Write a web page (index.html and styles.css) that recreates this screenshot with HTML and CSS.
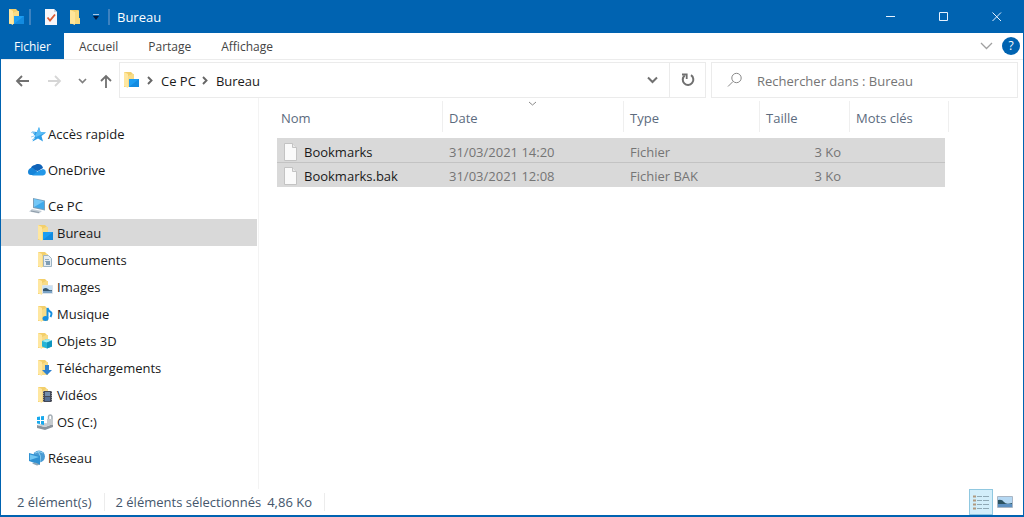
FILE: index.html
```
<!DOCTYPE html>
<html lang="fr">
  <head>
    <meta charset="utf-8">
    <title>Bureau</title>
    <link rel="stylesheet" href="styles.css">
  </head>
  <body>
    <!-- shared folder shapes -->
    <svg class="defs" width="0" height="0">
      <symbol id="folder" viewBox="0 0 18 18">
        <path d="M1 1h7l2 2v13H1z" fill="#f3cf6b"/>
        <path d="M1 1l4 2v14l-4-2z" fill="#ffe7a0"/>
        <path d="M9 3h2v13H5V5z" fill="#f8dc88"/>
      </symbol>
      <symbol id="desktop" viewBox="0 0 18 18">
        <use href="#folder"/>
        <path d="M6 8h10v8H6z" fill="#1c9df2"/>
        <path d="M6 16L16 8v8z" fill="#138be0"/>
      </symbol>
      <symbol id="file" viewBox="0 0 15 18">
        <path d="M1.500.5h8l4 4v13h-12z" fill="#fafafa" stroke="#c3c3c3"/>
        <path d="M9.500.5v4h4" fill="#e8e8e8" stroke="#c3c3c3"/>
      </symbol>
    </svg>

    <header class="titlebar">
      <svg class="icon" viewBox="0 0 18 18"><use href="#desktop"/></svg>
      <span class="divider"></span>
      <button class="quick" aria-label="Propriétés">
        <svg width="14" height="18" viewBox="0 0 14 18"><path d="M1 1h9l3 3v13H1z" fill="#f6f6fa"/><path d="M10 1l3 3h-3z" fill="#c9d3e3"/><path d="M3.500 9.500l2.500 3 5-6" fill="none" stroke="#dc5a32" stroke-width="1.800"/></svg>
      </button>
      <button class="quick" aria-label="Nouveau dossier">
        <svg width="14" height="18" viewBox="0 0 14 18"><path d="M2 2h8v8h2v6H2z" fill="#f2cf6c"/><path d="M2 2l5 2v13l-5-2z" fill="#ffe59a"/><path d="M7 4l4-2v8l1 1v5H7z" fill="#f8da80"/></svg>
      </button>
      <button class="quick small" aria-label="Personnaliser">
        <svg width="8" height="8" viewBox="0 0 8 8"><path d="M1 1.500h6" stroke="#a9c8e6"/><path d="M1 3h6L4 7z" fill="#061a3c"/></svg>
      </button>
      <span class="divider"></span>
      <span class="title">Bureau</span>
      <div class="controls">
        <button aria-label="Réduire"><svg width="10" height="10"><path d="M0 4.500h9" stroke="#e6f2ff"/></svg></button>
        <button aria-label="Agrandir"><svg width="10" height="10"><path d="M.5.5h8v8h-8z" fill="none" stroke="#e6f2ff"/></svg></button>
        <button aria-label="Fermer"><svg width="10" height="10"><path d="M.5.5l8.500 8.500M9 .5L.5 9" stroke="#e6f2ff"/></svg></button>
      </div>
    </header>

    <nav class="ribbon">
      <button class="tab file">Fichier</button>
      <button class="tab">Accueil</button>
      <button class="tab">Partage</button>
      <button class="tab">Affichage</button>
      <button class="expand" aria-label="Développer le ruban"><svg width="13" height="8"><path d="M1 1l5.500 5.500L12 1" fill="none" stroke="#a0a0a0" stroke-width="1.300"/></svg></button>
      <button class="help" aria-label="Aide">?</button>
    </nav>

    <div class="toolbar">
      <div class="history">
        <button aria-label="Précédent"><svg width="16" height="12" viewBox="0 0 16 12"><path d="M14 6H2M7 1L2 6l5 5" fill="none" stroke="#707070" stroke-width="1.800"/></svg></button>
        <button aria-label="Suivant"><svg width="16" height="12" viewBox="0 0 16 12"><path d="M1 6h12M8 1l5 5-5 5" fill="none" stroke="#d6d6d6" stroke-width="1.800"/></svg></button>
        <button class="recent" aria-label="Récents"><svg width="9" height="6"><path d="M1 1l3.500 3.500L8 1" fill="none" stroke="#808080" stroke-width="1.700"/></svg></button>
        <button class="up" aria-label="Dossier parent"><svg width="12" height="14" viewBox="0 0 12 14"><path d="M6 14V2M1 7l5-5 5 5" fill="none" stroke="#707070" stroke-width="1.800"/></svg></button>
      </div>
      <div class="address">
        <svg class="icon" viewBox="0 0 18 18"><use href="#desktop"/></svg>
        <svg class="arrow" width="6" height="9"><path d="M1 1l3.500 3.500L1 8" fill="none" stroke="#666" stroke-width="1.900"/></svg>
        <a href="#">Ce PC</a>
        <svg class="arrow" width="6" height="9"><path d="M1 1l3.500 3.500L1 8" fill="none" stroke="#666" stroke-width="1.900"/></svg>
        <a href="#">Bureau</a>
        <button class="drop" aria-label="Emplacements précédents"><svg width="11" height="8"><path d="M1 1.500L5.500 6 10 1.500" fill="none" stroke="#707070" stroke-width="2"/></svg></button>
        <button class="refresh" aria-label="Actualiser"><svg width="14" height="14" viewBox="0 0 14 14"><path d="M10 2.200a5.300 5.300 0 1 1-6.300.3" fill="none" stroke="#707070" stroke-width="2"/><path d="M1 1.500h4.700v4.500" fill="none" stroke="#707070" stroke-width="1.800"/></svg></button>
      </div>
      <label class="search">
        <svg width="16" height="16" viewBox="0 0 16 16"><circle cx="9.500" cy="6" r="4.700" fill="none" stroke="#888"/><path d="M6 9.500L1 14.500" stroke="#888"/></svg>
        <input type="text" aria-label="Rechercher" placeholder="Rechercher dans : Bureau">
      </label>
    </div>

    <main class="content">
      <nav class="sidebar">
        <ul>
          <li><a href="#"><svg class="icon" viewBox="0 0 18 18"><path d="M11 2l1.500 5 5.500.5-4.500 3.500 1.500 5.500-5-3-5.500 3 2.500-5.500L4 6.500l5 .5z" fill="#2f9fe8"/><path d="M11 2l1.500 5 5.500.5L8 12l-1-1 2-4z" fill="#5cbdf5"/><path d="M3 7.500l4 .5M3 12l3-1M4 15l3-2" stroke="#9bd2f5"/></svg>Accès rapide</a></li>
        </ul>
        <ul>
          <li><a href="#"><svg class="icon" viewBox="0 0 18 18"><path d="M3 9a4 4 0 0 1 4-5 5 5 0 0 1 8 3l-5 3z" fill="#1063b8"/><path d="M0 11a4 4 0 0 1 5-4l8 7H3a3 3 0 0 1-3-3z" fill="#1684d8"/><path d="M4 14.500l7-5 4-1.500a3.300 3.300 0 0 1 0 6.500z" fill="#2398e8"/></svg>OneDrive</a></li>
        </ul>
        <ul>
          <li><a href="#"><svg class="icon" viewBox="0 0 18 18"><path d="M5 1l12 2.500v10L5 11z" fill="#7b9fb9"/><path d="M6 2l10 2.300v8L6 10z" fill="#40a9ea"/><path d="M6 2l10 2.300L6 10z" fill="#74c7f6"/><path d="M4 12l10 2-3 2.500L1 14.500z" fill="#c2cdd6"/><path d="M3 14l8 1.500" stroke="#8d9ba8"/></svg>Ce PC</a></li>
          <li class="sub active"><a href="#"><svg class="icon" viewBox="0 0 18 18"><use href="#desktop"/></svg>Bureau</a></li>
          <li class="sub"><a href="#"><svg class="icon" viewBox="0 0 18 18"><use href="#folder"/><path d="M6.500 4.500h5l3 3v8h-8z" fill="#e6edf2" stroke="#9db4c4"/><path d="M8 8.500h4M8 10.500h5" stroke="#8fabc0"/><path d="M9 10h4v4H9z" fill="#7f9db5"/></svg>Documents</a></li>
          <li class="sub"><a href="#"><svg class="icon" viewBox="0 0 18 18"><use href="#folder"/><path d="M5.500 7.500h10v8h-10z" fill="#c7e0f4" stroke="#dbe3eb"/><path d="M6 11q3-2 5 0t4 1v1H6z" fill="#34566f"/><path d="M6 13h9v2H6z" fill="#7aa3c6"/></svg>Images</a></li>
          <li class="sub"><a href="#"><svg class="icon" viewBox="0 0 18 18"><use href="#folder"/><ellipse cx="8.500" cy="13.500" rx="3" ry="2.500" fill="#168fe0"/><path d="M10.500 13V3q1 3 3 4t0 5" fill="none" stroke="#168fe0" stroke-width="2"/></svg>Musique</a></li>
          <li class="sub"><a href="#"><svg class="icon" viewBox="0 0 18 18"><use href="#folder"/><path d="M5 9l5-2 5 1.500v6l-5 2-5-2z" fill="#25b4d5"/><path d="M5 9l5-2 5 1.500-5 2z" fill="#a0ecf3"/><path d="M10 10.500l5-2v6l-5 2z" fill="#0f95bf"/></svg>Objets 3D</a></li>
          <li class="sub"><a href="#"><svg class="icon" viewBox="0 0 18 18"><use href="#folder"/><path d="M8 6h4v5h3l-5 5-5-5h3z" fill="#2f82cf"/></svg>Téléchargements</a></li>
          <li class="sub"><a href="#"><svg class="icon" viewBox="0 0 18 18"><use href="#folder"/><path d="M6 5h9v11H6z" fill="#454a58"/><path d="M8 6h5v4H8z" fill="#728dad"/><path d="M8 11h5v4H8z" fill="#557096"/><path d="M6.500 5v11M14.500 5v11" stroke="#9a9a9a" stroke-dasharray="1 1"/></svg>Vidéos</a></li>
          <li class="sub"><a href="#"><svg class="icon" viewBox="0 0 18 18"><path d="M0 12l8 2 8-3v3l-8 3-8-2z" fill="#8b949d"/><path d="M0 12l8-2 8 1-8 3z" fill="#c6ccd1"/><path d="M0 4l3-.5V7H0zM4 3.300L7 3v4H4zM0 8h3v3l-3-.5zM4 8h3v4l-3-.8z" fill="#18a9ed"/><path d="M11.500 6V3.500a1.800 1.800 0 0 1 3.500 0V6" fill="none" stroke="#a4adb5" stroke-width="1.500"/><path d="M10 6h6v6h-6z" fill="#c4cace"/></svg>OS (C:)</a></li>
        </ul>
        <ul>
          <li><a href="#"><svg class="icon" viewBox="0 0 18 18"><circle cx="11" cy="7.500" r="6" fill="#4a9bd3"/><path d="M7 4q4-3 8 0M10 2q4 5 2 11" fill="none" stroke="#8fd0f0"/><path d="M1 4l11 3v9L1 12z" fill="#2f91d2"/><path d="M2 5.500l9 2.500-9 3z" fill="#71c6f2"/><path d="M4 14.500l5 2 3-1-5-2z" fill="#8aa5b8"/></svg>Réseau</a></li>
        </ul>
      </nav>

      <section class="files">
        <table>
          <thead>
            <tr>
              <th class="name">Nom</th>
              <th class="date">Date<svg class="sort" width="9" height="6"><path d="M1 1l3.500 3L8 1" fill="none" stroke="#8a8a8a"/></svg></th>
              <th class="type">Type</th>
              <th class="size">Taille</th>
              <th class="tags">Mots clés</th>
            </tr>
          </thead>
          <tbody>
            <tr>
              <td><div class="entry"><svg width="15" height="18"><use href="#file"/></svg>Bookmarks</div></td>
              <td>31/03/2021 14:20</td>
              <td>Fichier</td>
              <td class="number">3 Ko</td>
              <td></td>
            </tr>
            <tr>
              <td><div class="entry"><svg width="15" height="18"><use href="#file"/></svg>Bookmarks.bak</div></td>
              <td>31/03/2021 12:08</td>
              <td>Fichier BAK</td>
              <td class="number">3 Ko</td>
              <td></td>
            </tr>
          </tbody>
        </table>
      </section>
    </main>

    <footer class="status">
      <span class="count">2 élément(s)</span>
      <span class="selected">2 éléments sélectionnés</span>
      <span class="total">4,86 Ko</span>
      <div class="views">
        <button class="on" aria-label="Détails"><svg width="18" height="16" viewBox="0 0 18 16"><path d="M1 2.500h3M1 6.500h3M1 10.500h3M1 14.500h3" stroke="#b09a80" stroke-width="2"/><path d="M5 2.500h5M11 2.500h6M5 6.500h5M11 6.500h6M5 10.500h5M11 10.500h6M5 14.500h5M11 14.500h6" stroke="#8fa9b5"/></svg></button>
        <button aria-label="Grandes icônes"><svg width="16" height="12" viewBox="0 0 16 12"><path d="M.5.5h15v11H.5z" fill="#b5d8f3" stroke="#a9b6c4"/><path d="M1 4q4-1 6 2t8 1v1H1z" fill="#2b5261"/><path d="M1 8h14v3H1z" fill="#5b8fc0"/></svg></button>
      </div>
    </footer>
  </body>
</html>
```

FILE: styles.css
```
* {
  box-sizing: border-box;
}
body {
  margin: 0;
  min-height: 100vh;
  display: flex;
  flex-direction: column;
  border: 1px solid #0063b1;
  border-top: none;
  border-bottom-width: 2px;
  background-color: #ffffff;
  color: #1a1a1a;
  font-family: "Open Sans", "Noto Sans", sans-serif;
  font-size: 13px;
  line-height: 18px;
}
button {
  display: flex;
  align-items: center;
  justify-content: center;
  padding: 0;
  border: none;
  background: none;
  font: inherit;
  color: inherit;
}
a {
  color: inherit;
  text-decoration: none;
}
svg {
  display: block;
  flex: none;
}
.defs {
  position: absolute;
}
.icon {
  width: 18px;
  height: 18px;
}

/* Title bar */
.titlebar {
  display: flex;
  align-items: center;
  height: 33px;
  padding-left: 7px;
  background-color: #0063b1;
  color: #ffffff;
}
.divider {
  width: 2px;
  height: 16px;
  margin: 0 4px 0 3px;
  background-color: #3d82c0;
}
.quick {
  width: 24px;
  height: 24px;
}
.quick:first-of-type {
  margin-left: 4px;
}
.quick.small {
  width: 18px;
}
.title {
  margin-left: 3px;
}
.controls {
  display: flex;
  margin-left: auto;
}
.controls button {
  width: 53px;
  height: 33px;
}

/* Ribbon tabs */
.ribbon {
  display: flex;
  align-items: center;
  height: 27px;
  padding-right: 3px;
  border-bottom: 1px solid #ececec;
  font-size: 12px;
  color: #444444;
}
.tab {
  height: 26px;
  padding: 2px 15px 0;
}
.tab.file {
  width: 63px;
  background-color: #0063b1;
  color: #ffffff;
}
.expand {
  width: 24px;
  height: 26px;
  margin-left: auto;
  margin-right: 4px;
}
.help {
  width: 18px;
  height: 18px;
  border-radius: 50%;
  background-color: #0063b1;
  color: #ffffff;
}

/* Navigation and address */
.toolbar {
  display: flex;
  align-items: center;
  height: 38px;
  padding: 2px 5px 0 13px;
}
.history {
  display: flex;
  width: 105px;
}
.history button {
  width: 18px;
  height: 36px;
  padding-top: 2px;
  margin-right: 14px;
}
.history .recent {
  width: 9px;
  margin-right: 10px;
}
.history .up {
  margin-right: 0;
}
.address {
  flex: 582;
  display: flex;
  align-items: center;
  height: 36px;
  padding-left: 3px;
  border: 1px solid #ebebeb;
}
.address a {
  padding-top: 2px;
}
.arrow {
  margin: 0 8px 0 6px;
}
.drop {
  width: 34px;
  height: 34px;
  margin-left: auto;
}
.refresh {
  width: 36px;
  height: 34px;
  border-left: 1px solid #ebebeb;
}
.search {
  flex: 290;
  display: flex;
  align-items: center;
  height: 36px;
  margin-left: 5px;
  padding-left: 15px;
  border: 1px solid #ebebeb;
}
.search input {
  flex: 1;
  min-width: 0;
  margin-left: 14px;
  padding: 2px 0 0;
  border: none;
  outline: none;
  background: none;
  font: inherit;
}
.search input::placeholder {
  color: #757575;
  opacity: 1;
}

/* Side panel */
.content {
  flex: 1;
  display: flex;
}
.sidebar {
  width: 258px;
  padding-top: 22px;
  padding-right: 1px;
  border-right: 1px solid #f3f3f3;
}
.sidebar ul {
  margin: 0 0 9px;
  padding: 0;
  list-style: none;
}
.sidebar a {
  display: flex;
  align-items: center;
  gap: 2px;
  height: 27px;
  padding-left: 27px;
}
.sidebar .sub a {
  padding-left: 36px;
}
.sidebar .active {
  background-color: #d9d9d9;
}

/* File list */
.files {
  flex: 1;
  padding: 3px 0 0 18px;
}
table {
  width: 672px;
  table-layout: fixed;
  border-collapse: separate;
  border-spacing: 0;
}
th {
  position: relative;
  height: 37px;
  padding: 8px 0 0 6px;
  background: linear-gradient(#efefef, #efefef) no-repeat right top / 1px 31px;
  vertical-align: top;
  text-align: left;
  font-weight: normal;
  color: #5c6b7e;
}
th.name {
  width: 166px;
  padding-left: 4px;
}
th.date {
  width: 181px;
}
th.type {
  width: 136px;
}
th.size {
  width: 90px;
}
.sort {
  position: absolute;
  top: 0;
  left: 50%;
  margin-left: -6px;
}
td {
  height: 24px;
  padding: 2px 0 0 6px;
  background-color: #d9d9d9;
  background-clip: padding-box;
  color: #757575;
}
tbody tr:first-child td {
  height: 25px;
  box-shadow: inset 0 -1px #c3c3c3;
}
td:first-child {
  color: #1a1a1a;
}
/* the header reaches a little further than the rows */
tbody td:last-child {
  border-right: 4px solid transparent;
}
td.number {
  padding-right: 9px;
  text-align: right;
}
.entry {
  display: flex;
  align-items: center;
  gap: 6px;
}

/* Status bar */
.status {
  display: flex;
  align-items: center;
  height: 26px;
  padding: 0 10px 0 16px;
  color: #44566c;
}
.count {
  padding-right: 12px;
  border-right: 1px solid #ececec;
}
.selected {
  padding: 0 6px 0 11px;
}
.total {
  padding-right: 12px;
  border-right: 1px solid #ececec;
}
.views {
  display: flex;
  align-items: center;
  gap: 4px;
  margin-left: auto;
}
.views button {
  width: 16px;
  height: 26px;
}
.views .on {
  width: 24px;
  border: 1px solid #90c8e0;
  background-color: #d2eefa;
}
```
